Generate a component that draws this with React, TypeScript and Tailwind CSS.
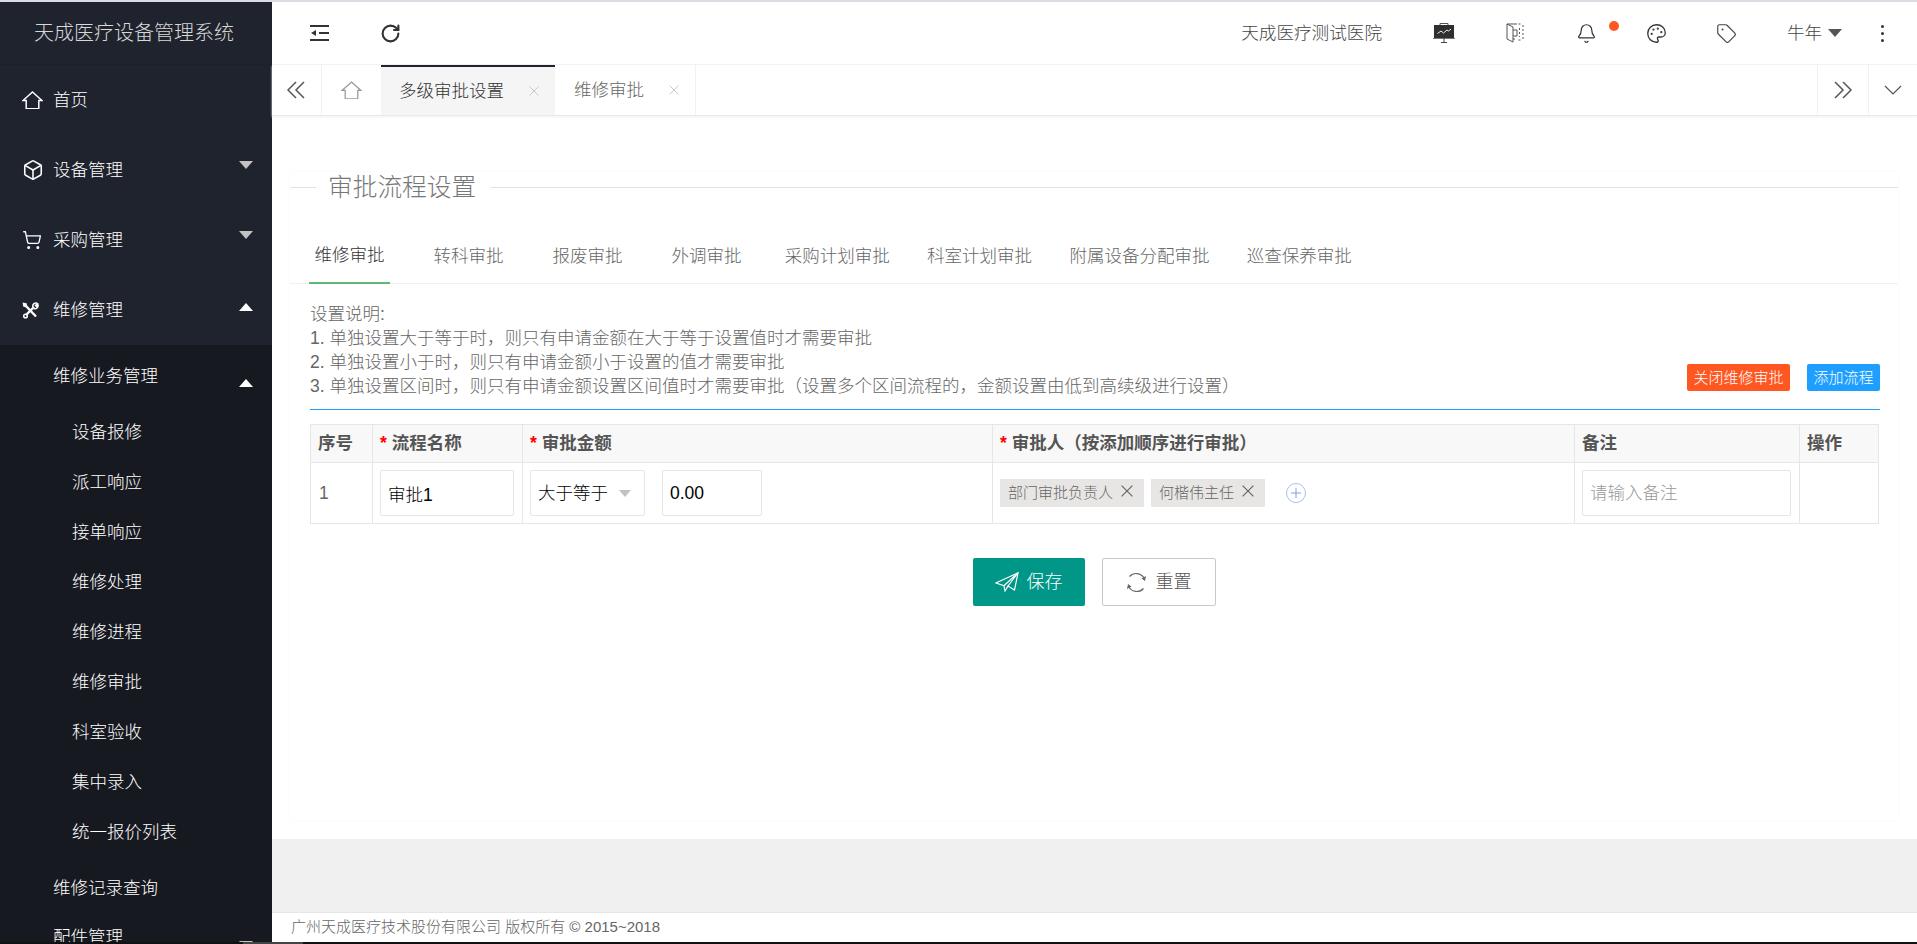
import React from "react";
import { Bell, Box, Palette, RotateCw, ShoppingCart, Tag } from "lucide-react";

function Tri({ up, color, cls }: { up?: boolean; color: "w" | "g"; cls?: string }) {
  const c = up
    ? "border-b-[8px] border-b-white"
    : color === "w"
    ? "border-t-[8px] border-t-white"
    : "border-t-[8px] border-t-[#c2c2c2]";
  return <span className={`w-0 h-0 shrink-0 border-x-[7.5px] border-x-transparent ${c} ${cls ?? ""}`} />;
}

function HomeIcon({ size = 21, color = "#fff", w = 1.4 }: { size?: number; color?: string; w?: number }) {
  return (
    <svg width={size} height={size * 0.9} viewBox="0 0 20 18" fill="none" stroke={color} strokeWidth={w}>
      <path d="M10 1 L19 9 H16 V17 H4 V9 H1 Z" strokeLinejoin="miter" />
    </svg>
  );
}

function Tools() {
  return (
    <svg width="17" height="17" viewBox="0 0 17 17" fill="none" stroke="#fff" strokeWidth="1.5">
      <path d="M3 3 L14 14.5" strokeWidth="2.4" />
      <path d="M1.5 1.5 L4 2 L4.5 4.5 L2 4 Z" fill="#fff" />
      <path d="M4 13 L12 5" strokeWidth="2.4" />
      <path d="M11 5 A3 3 0 0 1 15.5 1.5 L13.5 3.5 L14.5 4.5 L16 3 A3 3 0 0 1 12 6.5" />
      <circle cx="3.5" cy="14" r="1.8" />
    </svg>
  );
}

const subItems = ["设备报修", "派工响应", "接单响应", "维修处理", "维修进程", "维修审批", "科室验收", "集中录入", "统一报价列表"];

function Sidebar() {
  const rows = [
    { t: "首页", i: <HomeIcon /> },
    { t: "设备管理", i: <Box size={22} color="#fff" strokeWidth={1.7} />, a: "d" },
    { t: "采购管理", i: <ShoppingCart size={20} color="#fff" strokeWidth={1.6} />, a: "d" },
    { t: "维修管理", i: <Tools />, a: "u" },
  ];
  return (
    <aside className="w-[272px] shrink-0 h-full bg-[#1f232d] text-white overflow-hidden flex flex-col">
      <div className="h-[63px] shrink-0 flex items-center pl-[34px] text-[20px] text-[#d8d8d8] border-b border-[#1c2029]">
        天成医疗设备管理系统
      </div>
      {rows.map((r) => (
        <div key={r.t} className="h-[70px] shrink-0 flex items-center pl-[22px] pr-[19px] text-[17.5px]">
          <span className="w-[31px] shrink-0 flex items-center">{r.i}</span>
          <span className="flex-1">{r.t}</span>
          {r.a === "d" && <Tri color="g" cls="mb-[10px]" />}
          {r.a === "u" && <Tri up color="w" cls="mb-[6px]" />}
        </div>
      ))}
      <div className="flex-1 bg-[#171920] text-[17.5px] overflow-hidden">
        <div className="h-[62px] flex items-center pl-[53px] pr-[19px]">
          <span className="flex-1">维修业务管理</span>
          <Tri up color="w" cls="mt-[14px]" />
        </div>
        {subItems.map((s) => (
          <div key={s} className="h-[50px] flex items-center pl-[72px]">
            {s}
          </div>
        ))}
        <div className="h-[62px] flex items-center pl-[53px]">维修记录查询</div>
        <div className="h-[36px] flex items-center pl-[53px] pr-[19px]">
          <span className="flex-1">配件管理</span>
          <Tri color="g" cls="mt-[16px]" />
        </div>
      </div>
    </aside>
  );
}

function HeaderIconBox({ children, cls }: { children: React.ReactNode; cls?: string }) {
  return <div className={`w-[70px] flex items-center justify-center ${cls ?? ""}`}>{children}</div>;
}

function Header() {
  return (
    <header className="h-[63px] shrink-0 flex items-center border-b border-[#f3f3f3] text-[#444]">
      <svg className="ml-[38px]" width="20" height="18" viewBox="0 0 20 18" fill="none" stroke="#333" strokeWidth="2">
        <path d="M0 2 H19 M9 9 H19 M0 16 H19" />
        <path d="M1 9 L6 6 V12 Z" fill="#333" strokeWidth="0" />
      </svg>
      <RotateCw className="ml-[50px]" size={21} color="#333" strokeWidth={2.4} />
      <span className="ml-auto text-[17.6px] text-[#444]">天成医疗测试医院</span>
      <HeaderIconBox cls="ml-[27px]">
        <svg width="22" height="20" viewBox="0 0 22 20">
          <path d="M7 2 V0.5 H15 V2" fill="none" stroke="#555" strokeWidth="1" />
          <rect x="1" y="2" width="20" height="13" fill="#2f2f2f" />
          <path d="M0 15.5 H22" stroke="#777" strokeWidth="1" />
          <path d="M4.5 10.5 L8 8 L10.5 10 L14 7 L15.5 8 L18 6" fill="none" stroke="#eee" strokeWidth="1" />
          <path d="M11 15 V19.5 M8 19.5 H14" stroke="#444" strokeWidth="1" />
        </svg>
      </HeaderIconBox>
      <HeaderIconBox cls="w-[72px]">
        <svg width="19" height="20" viewBox="0 0 19 20" fill="none" stroke="#555" strokeWidth="1">
          <path d="M7 4 L1 1 V16 L7 19 Z" />
          <path d="M1 1 H11 M7 16 H9" />
          <path d="M7 7 H11 V13 H7" />
          <path d="M12.5 1 H14.5 M12.5 17 H14.5 M17 2 V17 M13.5 5 V14" strokeDasharray="2 2" />
        </svg>
      </HeaderIconBox>
      <HeaderIconBox cls="relative">
        <Bell size={21} color="#333" strokeWidth={1.4} />
        <span className="absolute left-[58px] top-[-2px] w-[10px] h-[10px] rounded-full bg-[#ff5722]" />
      </HeaderIconBox>
      <HeaderIconBox>
        <Palette size={21} color="#333" strokeWidth={1.5} />
      </HeaderIconBox>
      <HeaderIconBox>
        <Tag size={21} color="#444" strokeWidth={1.3} />
      </HeaderIconBox>
      <span className="ml-[26px] text-[17.5px] text-[#444]">牛年</span>
      <span className="ml-[6px] w-0 h-0 border-x-[7px] border-x-transparent border-t-[8px] border-t-[#555]" />
      <span className="ml-[39px] mr-[33px] flex flex-col gap-[4px]">
        <i className="block w-[3px] h-[3px] rounded-full bg-[#333]" />
        <i className="block w-[3px] h-[3px] rounded-full bg-[#333]" />
        <i className="block w-[3px] h-[3px] rounded-full bg-[#333]" />
      </span>
    </header>
  );
}

function Close({ color = "#c8c8c8", size = 10 }: { color?: string; size?: number }) {
  return (
    <svg width={size} height={size} viewBox="0 0 10 10" stroke={color} strokeWidth="1" fill="none">
      <path d="M0.5 0.5 L9.5 9.5 M9.5 0.5 L0.5 9.5" />
    </svg>
  );
}

function TabBar() {
  return (
    <div className="h-[51px] shrink-0 flex border-b border-[#e9e9e9] shadow-[0_1px_2px_#f0f0f0] text-[17.5px]">
      <div className="w-[50px] shrink-0 flex items-center justify-center border-r border-[#f0f0f0]">
        <svg width="19" height="18" viewBox="0 0 19 18" fill="none" stroke="#555" strokeWidth="1.5">
          <path d="M9 1 L1 9 L9 17 M17 1 L9 9 L17 17" />
        </svg>
      </div>
      <div className="w-[59px] shrink-0 flex items-center justify-center">
        <HomeIcon size={21} color="#999" w={1.2} />
      </div>
      <div className="w-[174px] shrink-0 flex items-center pl-[18px] bg-[#f5f5f5] border-t-2 border-[#1f232d] text-[#333]">
        <span className="w-[105px]">多级审批设置</span>
        <span className="ml-[25px]">
          <Close />
        </span>
      </div>
      <div className="w-[141px] shrink-0 flex items-center pl-[19px] border-r border-[#f0f0f0] text-[#666]">
        <span className="w-[70px]">维修审批</span>
        <span className="ml-[25px]">
          <Close />
        </span>
      </div>
      <div className="ml-auto w-[51px] shrink-0 flex items-center justify-center border-l border-[#f0f0f0]">
        <svg width="19" height="18" viewBox="0 0 19 18" fill="none" stroke="#555" strokeWidth="1.5">
          <path d="M1 1 L9 9 L1 17 M9 1 L17 9 L9 17" />
        </svg>
      </div>
      <div className="w-[49px] shrink-0 flex items-center justify-center border-l border-[#f0f0f0]">
        <svg width="18" height="10" viewBox="0 0 18 10" fill="none" stroke="#555" strokeWidth="1.2">
          <path d="M1 1 L9 9 L17 1" />
        </svg>
      </div>
    </div>
  );
}

const tabs = ["维修审批", "转科审批", "报废审批", "外调审批", "采购计划审批", "科室计划审批", "附属设备分配审批", "巡查保养审批"];

function Req({ children }: { children: React.ReactNode }) {
  return (
    <>
      <span className="text-[#ff0000] mr-[5px]">*</span>
      {children}
    </>
  );
}

function Chip({ text }: { text: string }) {
  return (
    <span className="h-[28px] flex items-center pl-[8px] pr-[11px] gap-[8px] bg-[#e8e6e4] text-[15px] text-[#666] shrink-0">
      <span>{text}</span>
      <span className="mb-[4px]">
        <Close color="#666" size={12} />
      </span>
    </span>
  );
}

const inputCls = "h-[46px] border border-[#e6e6e6] rounded-[2px] bg-white px-[7px] text-[17.5px] text-black outline-none";

function FlowTable() {
  return (
    <table className="mt-[14px] w-[1568px] table-fixed border-collapse text-[17.5px] text-[#666]">
      <colgroup>
        <col className="w-[62px]" />
        <col className="w-[150px]" />
        <col className="w-[470px]" />
        <col className="w-[582px]" />
        <col className="w-[225px]" />
        <col className="w-[79px]" />
      </colgroup>
      <thead>
        <tr className="h-[38px] bg-[#f8f8f8] font-bold text-[#555] text-left">
          <th className="border border-[#e6e6e6] px-[7px] font-bold">序号</th>
          <th className="border border-[#e6e6e6] px-[7px] font-bold">
            <Req>流程名称</Req>
          </th>
          <th className="border border-[#e6e6e6] px-[7px] font-bold">
            <Req>审批金额</Req>
          </th>
          <th className="border border-[#e6e6e6] px-[7px] font-bold">
            <Req>审批人（按添加顺序进行审批）</Req>
          </th>
          <th className="border border-[#e6e6e6] px-[7px] font-bold">备注</th>
          <th className="border border-[#e6e6e6] px-[7px] font-bold">操作</th>
        </tr>
      </thead>
      <tbody>
        <tr className="h-[61px]">
          <td className="border border-[#e6e6e6] px-[8px]">1</td>
          <td className="border border-[#e6e6e6] px-[7px]">
            <input className={`${inputCls} w-[134px]`} defaultValue="审批1" />
          </td>
          <td className="border border-[#e6e6e6] px-[7px]">
            <div className="flex items-center">
              <div className={`${inputCls} w-[115px] flex items-center justify-between pr-[13px]`}>
                <span>大于等于</span>
                <span className="w-0 h-0 border-x-[6.5px] border-x-transparent border-t-[7px] border-t-[#c2c2c2]" />
              </div>
              <input className={`${inputCls} w-[100px] ml-[17px]`} defaultValue="0.00" />
            </div>
          </td>
          <td className="border border-[#e6e6e6] px-[7px]">
            <div className="flex items-center gap-[7px]">
              <Chip text="部门审批负责人" />
              <Chip text="何楷伟主任" />
              <svg className="ml-[14px]" width="20" height="20" viewBox="0 0 20 20" fill="none" stroke="#a9bdf0" strokeWidth="1">
                <circle cx="10" cy="10" r="9.5" />
                <path d="M10 5 V15 M5 10 H15" stroke="#7f9fe8" />
              </svg>
            </div>
          </td>
          <td className="border border-[#e6e6e6] px-[7px]">
            <input className={`${inputCls} w-[209px] placeholder:text-[#999]`} placeholder="请输入备注" />
          </td>
          <td className="border border-[#e6e6e6]" />
        </tr>
      </tbody>
    </table>
  );
}

function Card() {
  return (
    <section className="mt-[56px] ml-[18px] mr-[19px] h-[648px] shadow-[0_0_3px_#f6f6f6]">
      <div className="h-[30px] flex items-center">
        <span className="w-[26px] h-px bg-[#e2e2e2]" />
        <span className="ml-[12px] mr-[14px] pt-[2px] text-[24.7px] leading-[30px] text-[#777]">审批流程设置</span>
        <span className="flex-1 h-px bg-[#e2e2e2]" />
      </div>
      <div className="mt-[26px] h-[56px] flex border-b border-[#f0f0f0] text-[17.5px] text-[#666]">
        {tabs.map((t, i) => (
          <div key={t} className="min-w-[119px] px-[13.2px] flex justify-center">
            <span
              className={
                i === 0
                  ? "h-[56px] px-[5.5px] flex items-center border-b-2 border-[#5fb878] text-[#333]"
                  : "h-[56px] px-[5.5px] flex items-center"
              }
            >
              {t}
            </span>
          </div>
        ))}
      </div>
      <div className="pl-[20px] pr-[18px]">
        <div className="pt-[18px] pb-[11px] flex items-end border-b border-[#1e9fff] text-[17.5px] leading-[24px] text-[#666]">
          <div className="flex-1">
            <p>设置说明:</p>
            <p>1. 单独设置大于等于时，则只有申请金额在大于等于设置值时才需要审批</p>
            <p>2. 单独设置小于时，则只有申请金额小于设置的值才需要审批</p>
            <p>3. 单独设置区间时，则只有申请金额设置区间值时才需要审批（设置多个区间流程的，金额设置由低到高续级进行设置）</p>
          </div>
          <div className="flex gap-[17px] mb-[7px]">
            <span className="w-[103px] h-[27px] flex items-center justify-center rounded-[2px] bg-[#ff5722] text-white text-[15px]">关闭维修审批</span>
            <span className="w-[73px] h-[27px] flex items-center justify-center rounded-[2px] bg-[#1e9fff] text-white text-[15px]">添加流程</span>
          </div>
        </div>
        <FlowTable />
        <div className="mt-[34px] pr-[2px] flex justify-center gap-[17px] text-[18px]">
          <button className="w-[112px] h-[48px] rounded-[2px] bg-[#009688] text-white flex items-center justify-center gap-[8px]">
            <svg width="24" height="20" viewBox="0 0 24 20" fill="none" stroke="#fff" strokeWidth="1.2">
              <path d="M0.8 11 L23 0.8 L19.5 18 L13 14 L10 19 L9 13.8 Z" />
              <path d="M23 0.8 L9 13.8 M23 0.8 L13 14" />
            </svg>
            保存
          </button>
          <button className="w-[114px] h-[48px] rounded-[2px] bg-white border border-[#c9c9c9] text-[#555] flex items-center justify-center gap-[9px]">
            <svg width="21" height="21" viewBox="0 0 21 21" fill="none" stroke="#666" strokeWidth="1.2">
              <path d="M3.5 4.5 A9 9 0 0 1 18 6 M17.5 16.5 A9 9 0 0 1 3 15" />
              <path d="M20 4 L19 9 L15.5 6.5 Z M1 17 L2 12 L5.5 14.5 Z" fill="#666" strokeWidth="0" />
            </svg>
            重置
          </button>
        </div>
      </div>
    </section>
  );
}

export default function App() {
  return (
    <div className="w-[1917px] h-[944px] flex flex-col overflow-hidden bg-white font-light font-['Liberation_Sans','Noto_Sans_CJK_SC',sans-serif]">
      <div className="h-[2px] shrink-0 bg-[#dcdce4]" />
      <div className="flex-1 min-h-0 flex">
        <Sidebar />
        <main className="flex-1 min-w-0 flex flex-col">
          <Header />
          <TabBar />
          <div className="h-[723px] shrink-0 overflow-hidden">
            <Card />
          </div>
          <div className="flex-1 bg-[#f0f0f0]" />
          <footer className="h-[30px] shrink-0 flex items-center pl-[19px] border-t border-[#e6e6e6] text-[15px] text-[#666]">
            广州天成医疗技术股份有限公司 版权所有 © 2015~2018
          </footer>
        </main>
      </div>
      <div className="h-[2px] shrink-0 bg-[#111] flex">
        <span className="ml-[243px] w-[60px] h-full bg-[#444]" />
      </div>
    </div>
  );
}
